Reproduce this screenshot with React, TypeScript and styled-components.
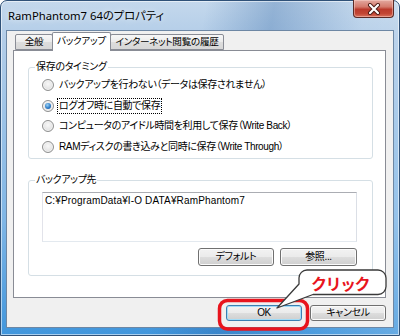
import styled, { createGlobalStyle } from 'styled-components';

const GlobalStyle = createGlobalStyle`
  html, body {
    margin: 0;
    padding: 0;
  }
  body {
    width: 400px;
    height: 336px;
    overflow: hidden;
    background: #ffffff;
  }
`;

const UI_FONT = `"Liberation Sans", "Noto Sans CJK JP", sans-serif`;
const ANNOTATION_RED = '#e8141d';

const Window = styled.div`
  position: relative;
  box-sizing: border-box;
  width: 400px;
  height: 336px;
  display: flex;
  flex-direction: column;
  padding: 0 5px 7px 5px;
  border: 1px solid #2f5178;
  border-radius: 7px 7px 0 0;
  background:
    linear-gradient(100deg, rgba(255, 255, 255, 0) 0%, rgba(255, 255, 255, 0) 45%, rgba(40, 95, 160, 0.3) 60%, rgba(255, 255, 255, 0.05) 80%, rgba(255, 255, 255, 0.2) 100%),
    linear-gradient(180deg, #c4d8ec 0px, #b3cde8 36px, #7fb6e6 220px, #3f95dc 336px);
  box-shadow: inset 0 0 0 1px rgba(255, 255, 255, 0.55);
  font-family: ${UI_FONT};
  font-size: 10px;
  letter-spacing: -0.35px;
  font-feature-settings: 'palt';
  color: #000;
`;

const TitleBar = styled.div`
  height: 29px;
  display: flex;
  align-items: flex-start;
`;

const TitleText = styled.span`
  margin: 7px 0 0 2px;
  font-family: "Noto Sans", "Noto Sans CJK JP", sans-serif;
  font-size: 11.3px;
  letter-spacing: 0;
  line-height: 16px;
  color: #000;
  text-shadow: 0 0 6px rgba(255, 255, 255, 0.9);
`;

const CloseButton = styled.div`
  margin: -1px 0 0 auto;
  width: 41px;
  height: 18px;
  box-sizing: border-box;
  display: flex;
  align-items: center;
  justify-content: center;
  border: 1px solid #5a2a26;
  border-top: none;
  border-radius: 0 0 4px 4px;
  background: linear-gradient(180deg, #e3a9a0 0%, #d47a6c 40%, #bb3a2c 55%, #c24634 80%, #d9725e 100%);
  box-shadow: inset 0 0 0 1px rgba(255, 220, 210, 0.45);
`;

const Client = styled.div`
  flex: 1;
  display: flex;
  flex-direction: column;
  padding: 1px 7px 6px 6px;
  background: #f0f0f0;
  border: 1px solid #6d87a4;
`;

const TabStrip = styled.div`
  height: 18px;
  display: flex;
  align-items: flex-end;
  padding-left: 2px;
  position: relative;
  z-index: 1;
`;

const Tab = styled.div<{ $active?: boolean; $width: number; $first?: boolean }>`
  box-sizing: border-box;
  width: ${({ $width }) => $width}px;
  height: ${({ $active }) => ($active ? 19 : 16)}px;
  margin-left: ${({ $first }) => ($first ? 0 : -1)}px;
  margin-bottom: ${({ $active }) => ($active ? -1 : 0)}px;
  display: flex;
  align-items: center;
  justify-content: center;
  border: 1px solid #898c95;
  border-bottom: ${({ $active }) => ($active ? 'none' : '1px solid #898c95')};
  border-radius: 2px 2px 0 0;
  background: ${({ $active }) =>
    $active ? '#ffffff' : 'linear-gradient(180deg, #f7f7f7 0%, #ebebeb 50%, #dddddd 51%, #d7d7d7 100%)'};
  position: relative;
  z-index: ${({ $active }) => ($active ? 2 : 1)};
  font-size: 9.6px;
  letter-spacing: -0.3px;
  line-height: 14px;
  white-space: nowrap;
  padding-bottom: ${({ $active }) => ($active ? 2 : 0)}px;
`;

const Panel = styled.div`
  flex: 1;
  display: flex;
  flex-direction: column;
  padding: 9px 12px 0 14px;
  background: #ffffff;
  border: 1px solid #898c95;
`;

const Group = styled.fieldset<{ $gap?: number }>`
  margin: ${({ $gap }) => $gap ?? 0}px 0 0 0;
  padding: 1px 15px 1px 13px;
  border: 1px solid #d5dfe5;
  border-radius: 3px;
  min-width: 0;
`;

const Legend = styled.legend`
  margin-left: -7px;
  padding: 0 1px;
  line-height: 14px;
  color: #000;
`;

const RadioRow = styled.label`
  height: 20.5px;
  display: flex;
  align-items: center;
  white-space: nowrap;
`;

const RadioCircle = styled.span<{ $checked?: boolean }>`
  box-sizing: border-box;
  width: 12px;
  height: 12px;
  margin-right: 3px;
  border-radius: 50%;
  border: 1px solid #8f9090;
  background: radial-gradient(circle at 50% 40%, #f8f8f8 0%, #e6e6e6 55%, #cfd0d0 100%);
  box-shadow: inset 0 0 0 1px #f4f4f4;
  display: flex;
  align-items: center;
  justify-content: center;
  flex-shrink: 0;

  &::after {
    content: '';
    display: ${({ $checked }) => ($checked ? 'block' : 'none')};
    width: 6px;
    height: 6px;
    border-radius: 50%;
    background: radial-gradient(circle at 40% 35%, #9dd3f5 0%, #2f7dc8 55%, #174f96 100%);
  }
`;

const RadioLabel = styled.span<{ $focused?: boolean }>`
  padding: 0 1px;
  line-height: 14px;
  border: 1px dotted ${({ $focused }) => ($focused ? '#000' : 'transparent')};
`;

const PathBox = styled.div`
  margin-top: 4px;
  height: 50px;
  box-sizing: border-box;
  padding: 1px 2px;
  border: 1px solid;
  border-color: #abadb3 #dbdfe6 #e3e9ef #e2e3ea;
  background: #fff;
  line-height: 13px;
  letter-spacing: 0.15px;
`;

const ButtonRow = styled.div`
  display: flex;
  justify-content: flex-end;
  gap: 6px;
  margin-top: 6px;
  padding-bottom: 8px;
`;

const Button = styled.div<{ $default?: boolean; $height: number; $width: number }>`
  box-sizing: border-box;
  width: ${({ $width }) => $width}px;
  height: ${({ $height }) => $height}px;
  display: flex;
  align-items: center;
  justify-content: center;
  border: 1px solid ${({ $default }) => ($default ? '#3c7fb1' : '#707070')};
  border-radius: 3px;
  background: linear-gradient(180deg, #f2f2f2 0%, #ebebeb 48%, #dddddd 52%, #cfcfcf 100%);
  box-shadow: inset 0 0 0 1px ${({ $default }) => ($default ? '#a3dcf7' : '#fbfbfb')};
  line-height: 14px;
  white-space: nowrap;
`;

const Footer = styled.div`
  display: flex;
  justify-content: flex-end;
  gap: 8px;
  margin-top: 7px;
`;

const Annotation = styled.div`
  position: absolute;
  left: 213px;
  top: 264px;
  width: 174px;
  height: 68px;
  pointer-events: none;
`;

const CalloutText = styled.div`
  position: absolute;
  left: 97px;
  top: 8px;
  font-family: "Noto Sans CJK JP", sans-serif;
  font-size: 16px;
  font-weight: 700;
  line-height: 20px;
  letter-spacing: -1.5px;
  font-feature-settings: normal;
  color: ${ANNOTATION_RED};
`;

const CloseGlyph = () => (
  <svg width="14" height="12" viewBox="0 0 14 12">
    <path d="M3 2 L11 10 M11 2 L3 10" stroke="#4a1a14" strokeWidth="4" strokeLinecap="round" />
    <path d="M3 2 L11 10 M11 2 L3 10" stroke="#ffffff" strokeWidth="2.2" strokeLinecap="round" />
  </svg>
);

const options = [
  'バックアップを行わない（データは保存されません）',
  'ログオフ時に自動で保存',
  'コンピュータのアイドル時間を利用して保存（Write Back）',
  'RAMディスクの書き込みと同時に保存（Write Through）',
];

export default function App() {
  const selected = 1;

  return (
    <>
      <GlobalStyle />
      <Window>
        <TitleBar>
          <TitleText>RamPhantom7 64のプロパティ</TitleText>
          <CloseButton>
            <CloseGlyph />
          </CloseButton>
        </TitleBar>
        <Client>
          <TabStrip>
            <Tab $width={38} $first>全般</Tab>
            <Tab $width={59} $active>バックアップ</Tab>
            <Tab $width={114}>インターネット閲覧の履歴</Tab>
          </TabStrip>
          <Panel>
            <Group>
              <Legend>保存のタイミング</Legend>
              {options.map((text, i) => (
                <RadioRow key={text}>
                  <RadioCircle $checked={i === selected} />
                  <RadioLabel $focused={i === selected}>{text}</RadioLabel>
                </RadioRow>
              ))}
            </Group>
            <Group $gap={14}>
              <Legend>バックアップ先</Legend>
              <PathBox>C:¥ProgramData¥I-O DATA¥RamPhantom7</PathBox>
              <ButtonRow>
                <Button $width={76} $height={18}>デフォルト</Button>
                <Button $width={77} $height={18}>参照...</Button>
              </ButtonRow>
            </Group>
          </Panel>
          <Footer>
            <Button $width={76} $height={16} $default>OK</Button>
            <Button $width={76} $height={16}>キャンセル</Button>
          </Footer>
        </Client>
        <Annotation>
          <svg width="174" height="68" viewBox="0 0 174 68">
            <rect x="5.5" y="35.5" width="88" height="28.5" rx="8" fill="none" stroke={ANNOTATION_RED} strokeWidth="3.5" />
            <path
              d="M93 5 H164 A8 8 0 0 1 172 13 V21.5 A8 8 0 0 1 164 29.5 H99 L63 43 L85 19 V13 A8 8 0 0 1 93 5 Z"
              fill="#ffffff"
              stroke="#3a3a3a"
              strokeWidth="1.3"
              strokeLinejoin="round"
            />
          </svg>
          <CalloutText>クリック</CalloutText>
        </Annotation>
      </Window>
    </>
  );
}
